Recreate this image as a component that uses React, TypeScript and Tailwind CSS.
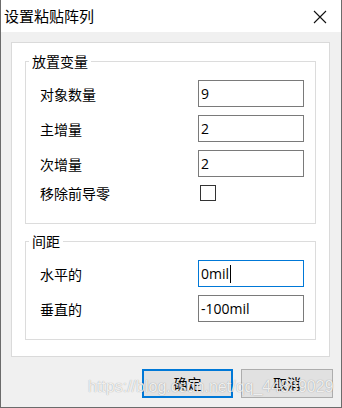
import React from "react";

const cjk = { fontFamily: '"Noto Sans CJK SC", "Noto Sans", sans-serif' };
const latin = { fontFamily: '"Open Sans", "Noto Sans CJK SC", sans-serif' };

function Field({ label, value, focused }: { label: string; value: string; focused?: boolean }) {
  return (
    <div className="flex items-center h-[27px]">
      <span className="w-[158px] text-[14px] leading-[20px] text-black">{label}</span>
      <div
        className={
          "w-[106px] h-[27px] flex items-center px-[2px] bg-white text-[14px] text-black border " +
          (focused ? "border-[#0078d7]" : "border-[#7a7a7a]")
        }
        style={latin}
      >
        <span>{value}</span>
        {focused && <span className="w-px h-[18px] bg-black ml-px" />}
      </div>
    </div>
  );
}

function Group({ title, height, className, children }: { title: string; height: string; className?: string; children: React.ReactNode }) {
  return (
    <div className={"relative w-[291px] border border-[#dcdcdc] pt-[18px] pl-[14px] " + height + " " + (className ?? "")}>
      <span className="absolute left-[3px] top-[-11px] bg-white px-[3px] text-[14px] leading-[20px] text-black">
        {title}
      </span>
      <div className="flex flex-col gap-[8px]">{children}</div>
    </div>
  );
}

export default function App() {
  return (
    <div
      className="relative w-[342px] h-[408px] bg-[#f0f0f0] border-l border-r border-b border-[#6b6b6b] flex flex-col overflow-hidden"
      style={cjk}
    >
      {/* title bar */}
      <div className="h-[32px] bg-white flex items-center justify-between pl-[3px] pr-[14px] shrink-0">
        <span className="text-[15px] text-black leading-[20px]">设置粘贴阵列</span>
        <svg width="14" height="14" viewBox="0 0 14 14" className="mt-[1px]">
          <path d="M1 1 L13 13 M13 1 L1 13" stroke="#111" strokeWidth="1.1" />
        </svg>
      </div>

      {/* panel */}
      <div className="mt-[10px] ml-[10px] w-[319px] h-[315px] bg-white border border-[#dadada] px-[13px] pt-[18px] shrink-0">
        <Group title="放置变量" height="h-[163px]">
          <Field label="对象数量" value="9" />
          <Field label="主增量" value="2" />
          <Field label="次增量" value="2" />
          <div className="flex items-center h-[16px]">
            <span className="w-[158px] text-[14px] leading-[20px] text-black">移除前导零</span>
            <div className="w-[16px] h-[16px] ml-[2px] border border-[#333] bg-white" />
          </div>
        </Group>
        <Group title="间距" height="h-[99px]" className="mt-[17px]">
          <Field label="水平的" value="0mil" focused />
          <Field label="垂直的" value="-100mil" />
        </Group>
      </div>

      {/* buttons */}
      <div className="flex gap-[8px] mt-[12px] ml-[141px] shrink-0">
        <button className="w-[91px] h-[29px] bg-[#e1e1e1] border-2 border-[#0078d7] text-[14px] text-black flex items-center justify-center">
          确定
        </button>
        <button className="w-[92px] h-[29px] bg-[#e1e1e1] border border-[#adadad] text-[14px] text-black flex items-center justify-center">
          取消
        </button>
      </div>

      {/* watermark */}
      <span
        className="absolute left-[87px] top-[377px] text-[16px] leading-[20px] text-[rgba(255,255,255,0.85)] [text-shadow:0_0_1px_rgba(0,0,0,0.4)] whitespace-nowrap pointer-events-none"
        style={{ fontFamily: '"Liberation Sans", Arial, sans-serif' }}
      >
        https://blog.csdn.net/qq_44839029
      </span>
    </div>
  );
}
